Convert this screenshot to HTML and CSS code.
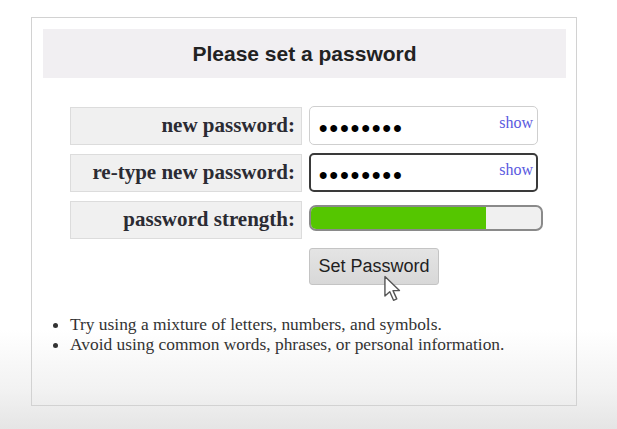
FILE: index.html
```html
<!DOCTYPE html>
<html>
<head>
<meta charset="utf-8">
<link rel="stylesheet" href="styles.css">
</head>
<body>
<div class="card">
  <div class="header">Please set a password</div>
  <div class="form">
    <div class="row">
      <div class="label">new password:</div>
      <div class="field"><span class="dots">••••••••</span><span class="show">show</span></div>
    </div>
    <div class="row">
      <div class="label">re-type new password:</div>
      <div class="field focused"><span class="dots">••••••••</span><span class="show">show</span></div>
    </div>
    <div class="row">
      <div class="label">password strength:</div>
      <div class="strength"><div class="fill" style="width:76%"></div></div>
    </div>
    <div class="actions">
      <button class="btn">Set Password</button>
      <svg class="cursor" width="20" height="28" viewBox="0 0 18 26"><path d="M1.5 1.5 L1.5 19.5 L6 15.5 L9.5 23.5 L12.5 22.2 L9 14.5 L15 14.5 Z" fill="#fff" stroke="#555" stroke-width="1.3" stroke-linejoin="round"/></svg>
    </div>
  </div>
  <ul class="tips">
    <li>Try using a mixture of letters, numbers, and symbols.</li>
    <li>Avoid using common words, phrases, or personal information.</li>
  </ul>
</div>
</body>
</html>
```
FILE: styles.css
```css
html, body {
  margin: 0;
  padding: 0;
}
body {
  width: 617px;
  height: 429px;
  overflow: hidden;
  background: linear-gradient(to bottom, #ffffff 0px, #ffffff 330px, #f2f2f2 390px, #e5e5e5 429px);
  font-family: "Liberation Serif", serif;
}
.card {
  margin: 17px 0 0 31px;
  width: 546px;
  height: 389px;
  border: 1px solid #d2d2d2;
  padding: 11px 10px 0 11px;
  box-sizing: border-box;
}
.header {
  height: 49px;
  background: #f1eff2;
  display: flex;
  align-items: center;
  justify-content: center;
  font-family: "Liberation Sans", sans-serif;
  font-weight: bold;
  font-size: 21px;
  color: #222;
}
.form {
  margin: 28px 0 0 27px;
  display: flex;
  flex-direction: column;
  gap: 8px;
}
.row {
  display: flex;
  align-items: center;
  gap: 7px;
  height: 39px;
}
.label {
  width: 232px;
  height: 38px;
  box-sizing: border-box;
  background: #f0f0f0;
  border: 1px solid #dcdcdc;
  display: flex;
  align-items: center;
  justify-content: flex-end;
  padding-right: 6px;
  font-weight: bold;
  font-size: 21px;
  color: #2b2b33;
}
.field {
  position: relative;
  width: 229px;
  height: 39px;
  box-sizing: border-box;
  border: 1px solid #cfcfcf;
  border-radius: 5px;
  background: #fff;
  display: flex;
  align-items: center;
  padding-left: 9px;
}
.field.focused {
  border: 2px solid #3a3a3a;
  padding-left: 8px;
}
.dots {
  font-family: "Liberation Sans", sans-serif;
  font-size: 24px;
  font-weight: bold;
  letter-spacing: 2.2px;
  color: #000;
  line-height: 1;
  margin-top: 5px;
}
.show {
  position: absolute;
  right: 4px;
  top: 7px;
  font-size: 16px;
  color: #5a5ae0;
}
.focused .show {
  right: 3px;
  top: 6px;
}
.strength {
  align-self: flex-start;
  width: 234px;
  height: 26px;
  margin-top: 5px;
  box-sizing: border-box;
  border: 2px solid #8a8a8a;
  border-radius: 7px;
  background: #f0f0f0;
  overflow: hidden;
}
.fill {
  height: 100%;
  background: #55c600;
}
.actions {
  position: relative;
  margin: 1px 0 0 239px;
  height: 38px;
}
.btn {
  width: 130px;
  height: 37px;
  font-family: "Liberation Sans", sans-serif;
  font-size: 18px;
  color: #1f1f1f;
  background: linear-gradient(to bottom, #e4e4e4, #d8d8d8);
  border: 1px solid #c4c4c4;
  border-radius: 3px;
  padding: 0;
}
.cursor {
  position: absolute;
  left: 74px;
  top: 27px;
}
.tips {
  margin: 28px 0 0 0;
  padding: 0 0 0 27px;
  font-size: 17.4px;
  line-height: 20px;
  color: #333;
}
```
